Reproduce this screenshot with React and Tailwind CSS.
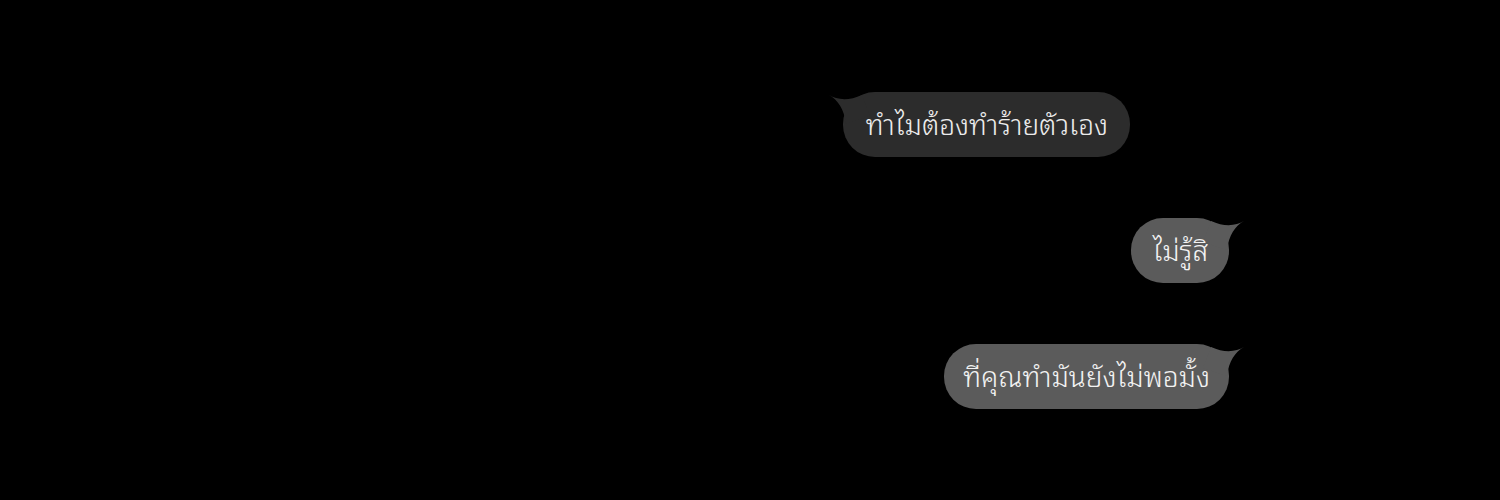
export default function App() {
  const font = { fontFamily: "'Noto Sans Thai Looped', 'Garuda', 'Loma', 'Norasi', 'Sawasdee', 'Noto Sans Thai', 'Noto Sans', sans-serif" };
  return (
    <div className="w-[1500px] h-[500px] bg-black overflow-hidden flex flex-col items-end pr-[271px] pt-[92px] gap-[61px]" style={font}>
      <div className="relative mr-[99px] h-[65px] rounded-[32px] bg-[#2c2c2c] pl-[23px] pr-[22px] flex items-center text-[28px] font-light text-[#ececec] whitespace-nowrap">
        <svg className="absolute left-[-15px] top-[2px]" width="45" height="32" viewBox="0 0 45 32">
          <path d="M1,1 C 9,6 21,7 34,1 L 42,22 L 18,30 C 16,15 10,6 1,1 Z" fill="#2c2c2c" />
        </svg>
        <span className="relative pb-[4px]">ทำไมต้องทำร้ายตัวเอง</span>
      </div>
      <div className="relative h-[65px] rounded-[32px] bg-[#5b5b5b] px-[21px] flex items-center text-[28px] font-light text-[#f2f2f2] whitespace-nowrap">
        <svg className="absolute right-[-16px] top-[2px]" width="45" height="32" viewBox="0 0 45 32">
          <path d="M44,1 C 36,6 24,7 11,1 L 3,22 L 27,30 C 29,15 35,6 44,1 Z" fill="#5b5b5b" />
        </svg>
        <span className="relative pb-[4px]">ไม่รู้สิ</span>
      </div>
      <div className="relative h-[65px] rounded-[32px] bg-[#5b5b5b] px-[19px] flex items-center text-[28px] font-light text-[#f2f2f2] whitespace-nowrap">
        <svg className="absolute right-[-16px] top-[2px]" width="45" height="32" viewBox="0 0 45 32">
          <path d="M44,1 C 36,6 24,7 11,1 L 3,22 L 27,30 C 29,15 35,6 44,1 Z" fill="#5b5b5b" />
        </svg>
        <span className="relative pb-[4px]">ที่คุณทำมันยังไม่พอมั้ง</span>
      </div>
    </div>
  );
}
